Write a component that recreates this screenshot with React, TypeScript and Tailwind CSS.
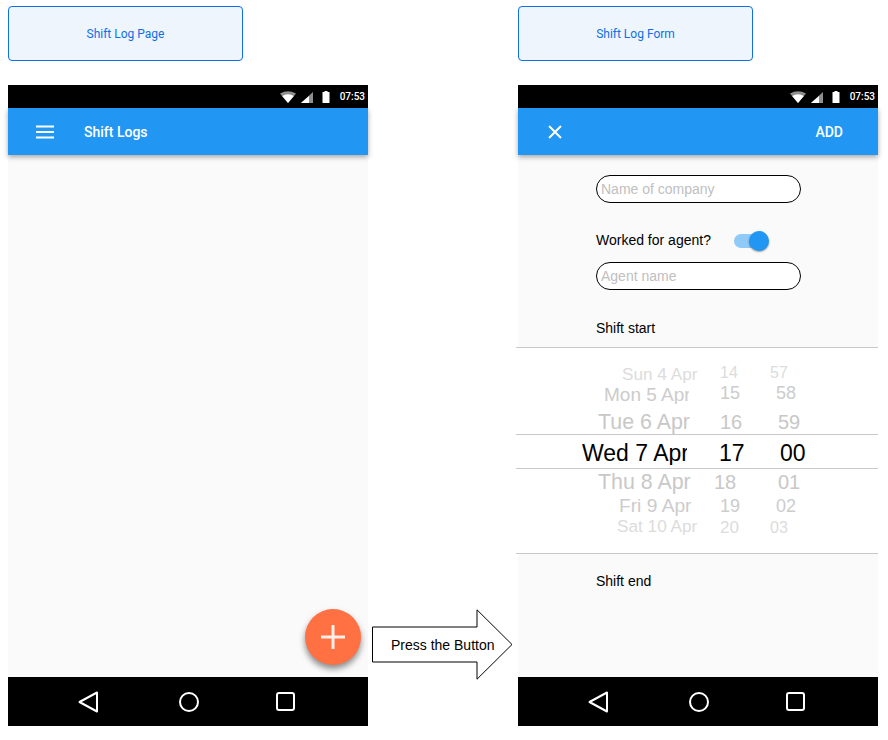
import type { ReactNode } from 'react'

const pickerRows = [
  {
    row: 'h-[20px] text-[#dcdcdc]',
    date: 'Sun 4 Apr',
    dateCls: 'ml-[106px] w-[76px] text-[17.2px] pt-[2px]',
    hour: '14',
    hourCls: 'text-[16px] pb-0.5 pl-[6px]',
    min: '57',
    minCls: 'text-[16px] pb-0.5',
  },
  {
    row: 'h-[18px] text-[#cccccc]',
    date: 'Mon 5 Apr',
    dateCls: 'ml-[88px] w-[85px] text-[19px] pt-[2px]',
    hour: '15',
    hourCls: 'text-[18px] pl-[6px]',
    min: '58',
    minCls: 'text-[18px] pl-[6px]',
  },
  {
    row: 'h-[24px] mt-2 text-[#c8c8c8]',
    date: 'Tue 6 Apr',
    dateCls: 'ml-[82px] w-[93px] text-[21.4px] pt-[2px]',
    hour: '16',
    hourCls: 'text-[20px] pl-[6px]',
    min: '59',
    minCls: 'text-[20px] pl-2',
  },
  {
    row: 'h-[35px] border-y border-[#c8c8c8] text-black',
    date: 'Wed 7 Apr',
    dateCls: 'ml-[66px] w-[105px] text-[23px] pt-[3px]',
    hour: '17',
    hourCls: 'text-[23px] pl-[5px] pt-[3px]',
    min: '00',
    minCls: 'text-[23px] pl-[10px] pt-[3px]',
  },
  {
    row: 'h-[26px] text-[#c8c8c8]',
    date: 'Thu 8 Apr',
    dateCls: 'ml-[82px] w-[93px] text-[21.4px] pt-[2px]',
    hour: '18',
    hourCls: 'text-[20px] pb-[1px]',
    min: '01',
    minCls: 'text-[20px] pl-2 pb-[1px]',
  },
  {
    row: 'h-[22px] text-[#cccccc]',
    date: 'Fri 9 Apr',
    dateCls: 'ml-[103px] w-[73px] text-[19.2px]',
    hour: '19',
    hourCls: 'text-[18px] pl-[6px]',
    min: '02',
    minCls: 'text-[18px] pl-[6px]',
  },
  {
    row: 'h-[20px] text-[#dcdcdc]',
    date: 'Sat 10 Apr',
    dateCls: 'ml-[101px] w-[81px] text-[17.2px]',
    hour: '20',
    hourCls: 'text-[17px] pl-[6px]',
    min: '03',
    minCls: 'text-[16px] pt-[2px]',
  },
]

function StatusBar() {
  return (
    <div className="flex h-[23px] items-center justify-end bg-black pr-[3px] pt-[1px]">
      <svg width="16" height="12" viewBox="0 0 16 12">
        <path d="M0 2.6Q8 -2.2 16 2.6L8 12Z" fill="#8f8f8f" />
        <path d="M2.2 5.1Q8 1.2 13.8 5.1L8 12Z" fill="#fff" />
      </svg>
      <svg className="ml-[5px]" width="12" height="11" viewBox="0 0 12 11">
        <path d="M12 0V11H0Z" fill="#8f8f8f" />
        <path d="M8 4V11H0Z" fill="#fff" />
      </svg>
      <svg className="ml-[9px]" width="8" height="12" viewBox="0 0 8 12">
        <path d="M2.5 0H5.5V1H7.5V12H0.5V1H2.5Z" fill="#fff" />
      </svg>
      <span className="ml-[10px] font-['Roboto',sans-serif] text-[10px] font-medium leading-none text-white">
        07:53
      </span>
    </div>
  )
}

function NavBar() {
  return (
    <div className="flex h-[49px] shrink-0 items-center bg-black px-[70px]">
      <svg width="20" height="22" viewBox="0 0 20 22" fill="none" stroke="#fff" strokeWidth="2">
        <path d="M19 1.5V20.5L1.5 11Z" strokeLinejoin="round" />
      </svg>
      <svg className="ml-[81px]" width="20" height="20" viewBox="0 0 20 20" fill="none" stroke="#fff" strokeWidth="2">
        <circle cx="10" cy="10" r="9" />
      </svg>
      <svg className="ml-[77px]" width="19" height="19" viewBox="0 0 19 19" fill="none" stroke="#fff" strokeWidth="2">
        <rect x="1" y="1" width="17" height="17" rx="2" />
      </svg>
    </div>
  )
}

function Phone({ bar, children }: { bar: ReactNode; children?: ReactNode }) {
  return (
    <div className="mt-6 flex h-[641px] w-[360px] flex-col">
      <StatusBar />
      <div className="relative z-10 flex h-[47px] shrink-0 items-center bg-[#2196f3] font-['Roboto',sans-serif] text-[14px] font-medium text-white shadow-[0_2px_5px_rgba(0,0,0,0.35)]">
        {bar}
      </div>
      <div className="relative flex-1 bg-[#fafafa]">{children}</div>
      <NavBar />
    </div>
  )
}

function PageLabel({ text }: { text: string }) {
  return (
    <div className="flex h-[55px] w-[235px] items-center justify-center rounded-[4px] border border-[#0f6fe6] bg-[#eef5fd] font-['Roboto',sans-serif] text-[12px] text-[#0f6fe6]">
      {text}
    </div>
  )
}

function RoundInput({ placeholder }: { placeholder: string }) {
  return (
    <input
      placeholder={placeholder}
      className="ml-[78px] block h-[28px] w-[205px] rounded-full border border-black bg-white pl-1 text-[14px] outline-none placeholder:text-[#c0c0c0]"
    />
  )
}

function TimePicker() {
  return (
    <div className="-ml-0.5 mt-[9px] h-[207px] w-[362px] border-y border-[#c8c8c8] bg-white pt-4">
      {pickerRows.map((r) => (
        <div key={r.date} className={`grid grid-cols-[198px_56px_1fr] items-center leading-none ${r.row}`}>
          <div className={`overflow-hidden whitespace-nowrap ${r.dateCls}`}>{r.date}</div>
          <div className={r.hourCls}>{r.hour}</div>
          <div className={r.minCls}>{r.min}</div>
        </div>
      ))}
    </div>
  )
}

export default function App() {
  return (
    <div className="flex h-[740px] w-[888px] overflow-hidden bg-white pl-2 font-['Liberation_Sans',Arial,sans-serif] text-black">
      <div className="w-[360px] pt-[6px]">
        <PageLabel text="Shift Log Page" />
        <Phone
          bar={
            <>
              <svg className="ml-[28px]" width="18" height="14" viewBox="0 0 18 14" fill="#fff">
                <rect y="0.5" width="18" height="2" />
                <rect y="6" width="18" height="2" />
                <rect y="11.5" width="18" height="2" />
              </svg>
              <span className="ml-[30px] pt-[2px]">Shift Logs</span>
            </>
          }
        >
          <button className="absolute left-[297px] top-[454px] flex h-14 w-14 items-center justify-center rounded-full bg-[#ff7043] shadow-[0_4px_6px_rgba(0,0,0,0.45)]">
            <svg width="24" height="24" viewBox="0 0 24 24" fill="#fdeee9">
              <rect x="10.5" width="3" height="24" />
              <rect y="10.5" width="24" height="3" />
            </svg>
          </button>
        </Phone>
      </div>

      <div className="w-[150px] pl-1 pt-[609px]">
        <div className="relative h-[72px] w-[141px]">
          <svg className="absolute inset-0" width="141" height="72" viewBox="0 0 141 72" fill="#fff" stroke="#000">
            <path d="M0.5 18H105V0.8L140 35.5L105 70.2V53H0.5Z" />
          </svg>
          <span className="absolute left-[19px] top-[28px] text-[14px] leading-4">Press the Button</span>
        </div>
      </div>

      <div className="w-[360px] pt-[6px]">
        <PageLabel text="Shift Log Form" />
        <Phone
          bar={
            <>
              <svg className="ml-[30px]" width="14" height="14" viewBox="0 0 14 14" stroke="#fff" strokeWidth="2">
                <path d="M1 1L13 13M13 1L1 13" />
              </svg>
              <span className="ml-auto mr-[35px] pt-[2px]">ADD</span>
            </>
          }
        >
          <div className="pt-5 text-[14px]">
            <RoundInput placeholder="Name of company" />
            <div className="ml-[78px] mt-7 flex h-5 items-center">
              <span className="w-[138px] pb-[2px] leading-4">Worked for agent?</span>
              <div className="relative h-[14px] w-[28px] rounded-full bg-[#90caf9]">
                <div className="absolute -top-[3px] left-[15px] h-5 w-5 rounded-full bg-[#2196f3] shadow-[0_1px_2px_rgba(0,0,0,0.4)]" />
              </div>
            </div>
            <div className="mt-[11px]">
              <RoundInput placeholder="Agent name" />
            </div>
            <div className="ml-[78px] mt-7 flex h-5 items-center">Shift start</div>
            <TimePicker />
            <div className="ml-[78px] mt-[17px] flex h-5 items-center">Shift end</div>
          </div>
        </Phone>
      </div>
    </div>
  )
}
